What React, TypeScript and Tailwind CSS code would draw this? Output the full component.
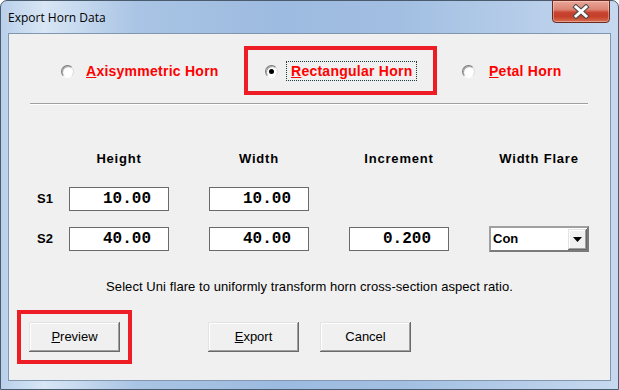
import React from "react";

function Radio({ checked }: { checked?: boolean }) {
  return (
    <span className="relative flex h-[13px] w-[13px] shrink-0 items-center justify-center rounded-full border border-t-[#7a7a7a] border-l-[#7a7a7a] border-r-[#dcdcdc] border-b-[#ffffff] bg-[radial-gradient(circle_at_60%_60%,#ffffff_40%,#e6e6e6_100%)] shadow-[inset_1px_1px_0_#a8a8a8]">
      {checked && <span className="h-[5px] w-[5px] rounded-full bg-black" />}
    </span>
  );
}

function NumBox({ value }: { value: string }) {
  return (
    <div className="flex h-[24px] w-[100px] items-center justify-end border border-[#6a6a6a] bg-white pr-[17px] font-['Liberation_Mono',monospace] text-[16px] font-bold text-black">
      {value}
    </div>
  );
}

function Btn({ children }: { children: React.ReactNode }) {
  return (
    <div className="flex h-[30px] w-[91px] items-center justify-center bg-[#f0f0f0] text-[13px] text-black shadow-[inset_-1px_-1px_0_#696969,inset_1px_1px_0_#e3e3e3,inset_-2px_-2px_0_#a0a0a0,inset_2px_2px_0_#ffffff]">
      {children}
    </div>
  );
}

export default function App() {
  return (
    <div className="h-[390px] w-[619px] overflow-hidden bg-white font-['Liberation_Sans',Arial,sans-serif]">
      <div className="relative h-[390px] w-[619px] rounded-t-[7px] border border-[#4b5b6e] bg-[linear-gradient(90deg,#b9d0ea_0%,#d8e6f5_7%,#a9c4e4_22%,#9dbbe0_45%,#a2bfe2_65%,#b6cde9_85%,#c7d9ef_100%)]">
        <div className="flex h-[32px] items-center pb-[1px] pl-[7px] pt-[3px] font-['Open_Sans',sans-serif] text-[12px] text-black">
          Export Horn Data
        </div>
        <div className="absolute right-[8px] top-[-1px] flex h-[23px] w-[58px] items-center justify-center rounded-b-[4px] border border-[#6b2a20] bg-[linear-gradient(180deg,#e9a698_0%,#dc8574_40%,#c8432f_55%,#c4402b_75%,#d9704f_100%)] shadow-[inset_0_0_0_1px_rgba(255,255,255,0.35)]">
          <svg width="18" height="15" viewBox="0 0 18 15">
            <path d="M4 3 L14 12 M14 3 L4 12" stroke="#4a4a4a" strokeWidth="5" strokeLinecap="square" />
            <path d="M4 3 L14 12 M14 3 L4 12" stroke="#ffffff" strokeWidth="3" strokeLinecap="square" />
          </svg>
        </div>

        <div className="relative mx-[7px] h-[348px] border border-[#8197b0] bg-[#f0f0f0]">
          {/* radio row */}
          <div className="mt-[27px] flex h-[20px] items-center pl-[52px] text-[14px] font-bold tracking-[0.25px] text-[#ff0000]">
            <div className="flex w-[204px] items-center">
              <Radio />
              <span className="ml-[12px]">
                <span className="underline">A</span>xisymmetric Horn
              </span>
            </div>
            <div className="flex w-[197px] items-center">
              <Radio checked />
              <span className="ml-[8px] flex h-[20px] items-center border border-dotted border-[#1a3a3a] px-[4px]">
                <span className="underline">R</span>ectangular Horn
              </span>
            </div>
            <div className="flex items-center">
              <Radio />
              <span className="ml-[14px]">
                <span className="underline">P</span>etal Horn
              </span>
            </div>
          </div>
          <div className="pointer-events-none absolute left-[235px] top-[12px] h-[49px] w-[193px] border-[4px] border-[#ee1c25]" />

          {/* separator */}
          <div className="ml-[21px] mt-[22px] h-[2px] w-[558px] border-t border-b border-t-[#a0a0a0] border-b-white" />

          {/* headers */}
          <div className="mt-[46px] flex h-[16px] items-center gap-[40px] pl-[60px] text-[13px] font-bold tracking-[0.8px] text-black">
            <div className="w-[100px] text-center">Height</div>
            <div className="w-[100px] text-center">Width</div>
            <div className="w-[100px] text-center">Increment</div>
            <div className="w-[100px] text-center">Width Flare</div>
          </div>

          {/* S1 */}
          <div className="mt-[20px] flex h-[24px] items-center pl-[28px]">
            <div className="w-[32px] text-[13px] font-bold text-black">S1</div>
            <div className="flex gap-[40px]">
              <NumBox value="10.00" />
              <NumBox value="10.00" />
            </div>
          </div>

          {/* S2 */}
          <div className="mt-[16px] flex h-[24px] items-center pl-[28px]">
            <div className="w-[32px] text-[13px] font-bold text-black">S2</div>
            <div className="flex items-center gap-[40px]">
              <NumBox value="40.00" />
              <NumBox value="40.00" />
              <NumBox value="0.200" />
              <div className="flex h-[26px] w-[100px] items-center border-2 border-t-[#a0a0a0] border-l-[#a0a0a0] border-r-[#7a7a7a] border-b-[#7a7a7a] bg-white">
                <span className="flex-1 pl-[2px] text-[13px] font-bold text-black">Con</span>
                <div className="flex h-[21px] w-[19px] items-center justify-center bg-[#f0f0f0] shadow-[inset_-1px_-1px_0_#696969,inset_1px_1px_0_#e3e3e3,inset_-2px_-2px_0_#a0a0a0,inset_2px_2px_0_#ffffff]">
                  <svg width="9" height="5" viewBox="0 0 9 5">
                    <path d="M0 0 H9 L4.5 5 Z" fill="#000" />
                  </svg>
                </div>
              </div>
            </div>
          </div>

          {/* helper text */}
          <div className="mt-[28px] h-[16px] text-center text-[13px] leading-[16px] tracking-[0.07px] text-black">
            Select Uni flare to uniformly transform horn cross-section aspect ratio.
          </div>

          {/* buttons */}
          <div className="mt-[27px] flex pl-[20px]">
            <Btn>
              <span className="underline">P</span>review
            </Btn>
            <div className="ml-[88px]">
              <Btn>
                <span className="underline">E</span>xport
              </Btn>
            </div>
            <div className="ml-[21px]">
              <Btn>Cancel</Btn>
            </div>
          </div>
          <div className="pointer-events-none absolute left-[8px] top-[276px] h-[54px] w-[115px] border-[4px] border-[#ee1c25]" />
        </div>
      </div>
    </div>
  );
}
